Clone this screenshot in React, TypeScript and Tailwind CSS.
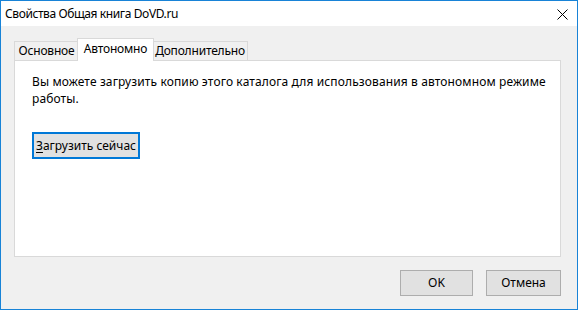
import { useState } from 'react';

const tabs = [
  { label: 'Основное', w: 'w-[65px]' },
  { label: 'Автономно', w: 'w-[77px]' },
  { label: 'Дополнительно', w: 'w-[96px]' },
]

const App = () => {
  const [active, setActive] = useState(1)

  return (
    <div className="w-[578px] h-[310px] flex flex-col border border-[#1883d7] bg-[#f0f0f0] text-[12px] text-black font-['Noto_Sans',sans-serif] overflow-hidden">
      <div className="h-[25px] shrink-0 bg-white flex items-center justify-between pl-[4px] pr-[9px]">
        <span className="leading-none tracking-[-0.4px]">Свойства Общая книга DoVD.ru</span>
        <svg width="11" height="11" viewBox="0 0 11 11" className="mt-[1px]">
          <path d="M0.5 0.5L10.5 10.5M10.5 0.5L0.5 10.5" stroke="#000" strokeWidth="1" />
        </svg>
      </div>

      <div className="flex-1 flex flex-col pl-[13px] pr-[16px] pt-[12px]">
        <div className="flex items-end h-[22px]">
          {tabs.map((t, i) =>
            i === active ? (
              <button
                key={t.label}
                className={`${t.w} relative z-10 -mx-[2px] -mb-px h-[23px] bg-white border border-b-0 border-[#d9d9d9] leading-none pb-[3px] tracking-[-0.2px]`}
                onClick={() => setActive(i)}
              >
                {t.label}
              </button>
            ) : (
              <button
                key={t.label}
                className={`${t.w} h-[19px] bg-[#f0f0f0] border border-b-0 border-[#d9d9d9] leading-none pb-[1px] tracking-[-0.2px]`}
                onClick={() => setActive(i)}
              >
                {t.label}
              </button>
            )
          )}
        </div>

        <div className="h-[197px] bg-white border border-[#d9d9d9] pl-[17px] pr-[10px] pt-[12px]">
          <p className="leading-[17px] tracking-[0.12px]">
            Вы можете загрузить копию этого каталога для использования в автономном режиме работы.
          </p>
          <button className="mt-[25px] w-[108px] h-[27px] bg-[#e1e1e1] border-2 border-[#0078d7] leading-none">
            <span className="underline underline-offset-2">З</span>агрузить сейчас
          </button>
        </div>

        <div className="flex justify-end gap-[13px] mt-[13px]">
          <button className="w-[73px] h-[26px] bg-[#e1e1e1] border border-[#adadad] leading-none">OK</button>
          <button className="w-[75px] h-[26px] bg-[#e1e1e1] border border-[#adadad] leading-none">Отмена</button>
        </div>
      </div>
    </div>
  )
}

export default App
